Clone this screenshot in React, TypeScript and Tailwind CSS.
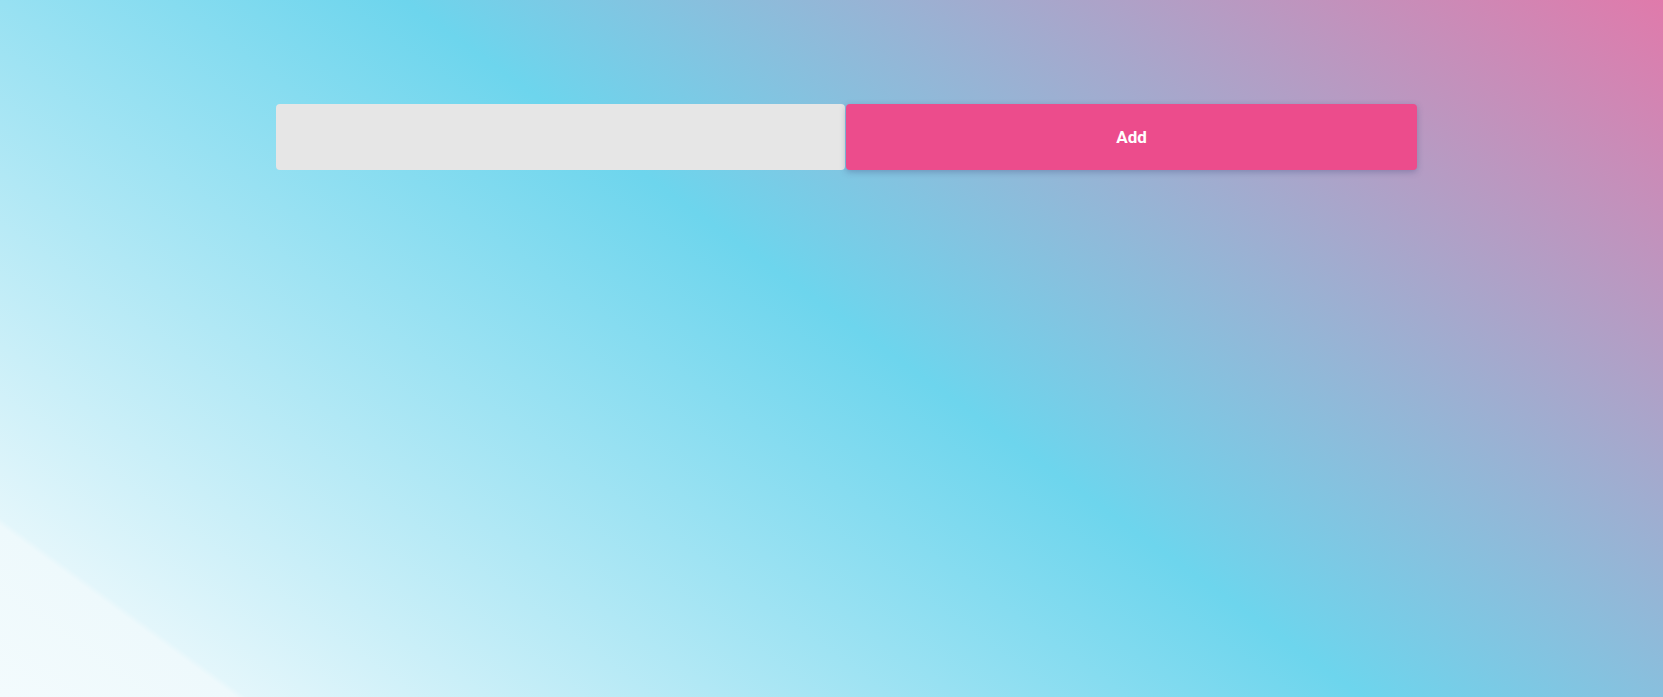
import { useState } from 'react';

export default function App() {
  const [value, setValue] = useState('');

  return (
    <div className="min-h-screen w-full bg-[linear-gradient(36deg,#f3fbfd_0%,#eef9fc_9%,#e3f6fb_9.4%,#6dd5ed_52%,#e07aab_100%)] font-['Roboto',sans-serif]">
      <div className="flex pt-[104px] pl-[276px]">
        <input
          value={value}
          onChange={(e) => setValue(e.target.value)}
          className="h-[66px] w-[569px] rounded-[4px] bg-[#e6e6e6] px-4 text-base text-gray-800 outline-none"
        />
        <button className="ml-px h-[66px] w-[571px] rounded-[4px] bg-[#ec4c8c] pt-px text-[17px] font-bold text-white shadow-[0_2px_6px_rgba(60,70,120,0.35)]">
          Add
        </button>
      </div>
    </div>
  );
}
